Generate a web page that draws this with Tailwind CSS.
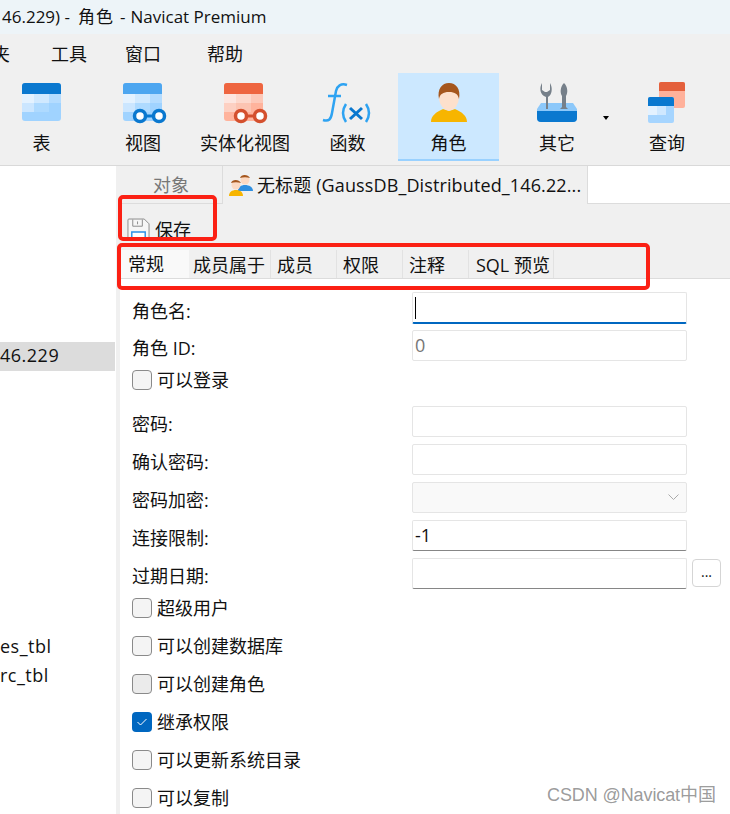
<!DOCTYPE html>
<html lang="zh-CN">
<head>
    <meta charset="UTF-8">
    <title>角色 - Navicat Premium</title>
    <script src="https://cdn.jsdelivr.net/npm/@tailwindcss/browser@4"></script>
</head>
<body class="bg-white">
<div class="relative w-[730px] h-[814px] overflow-hidden text-[18px] leading-[24px] text-[#111] font-['Open_Sans','Noto_Sans_CJK_SC',sans-serif]">

    <!-- Title bar -->
    <div class="h-[34px] bg-[#edf4f8] flex items-center text-[17px] whitespace-pre pl-[2px] pb-[1px]"><span>46.229) -</span><span class="ml-[8px] tracking-[1px]">角色</span><span class="ml-[6px]">-</span><span class="ml-[5px]">Navicat Premium</span></div>

    <!-- Menu -->
    <div class="h-[39px] bg-[#f0f0f0] flex items-center overflow-hidden">
        <span class="w-[10px] shrink-0 overflow-hidden flex justify-end">夹</span>
        <span class="w-[74px] ml-[41px] shrink-0">工具</span>
        <span class="w-[82px] shrink-0">窗口</span>
        <span class="shrink-0">帮助</span>
    </div>

    <!-- Toolbar -->
    <div class="h-[93px] bg-[#f0f0f0] border-b border-[#d9d9d9] flex">
        <div class="w-[83px] flex flex-col items-center pt-[10px]">
            <svg class="w-[40px] h-[39px]" viewBox="0 0 40 39"><rect width="39" height="38" rx="3" fill="#a0d3ff"/><rect y="11" width="12" height="9" fill="#e4f2ff"/><rect x="12" y="11" width="15" height="9" fill="#d0e9ff"/><rect x="27" y="11" width="12" height="9" fill="#b4dcff"/><rect y="20" width="12" height="9" fill="#cbe6ff"/><rect x="12" y="20" width="15" height="9" fill="#aedaff"/><path d="M0 11V3a3 3 0 0 1 3-3h33a3 3 0 0 1 3 3v8z" fill="#0a78cf"/></svg>
            <span class="mt-[9px]">表</span>
        </div>
        <div class="w-[118px] flex flex-col items-center pt-[10px]">
            <svg class="w-[44px] h-[41px] ml-[6px]" viewBox="0 0 44 41"><rect width="39" height="38" rx="3" fill="#a0d3ff"/><rect y="11" width="12" height="9" fill="#e4f2ff"/><rect x="12" y="11" width="15" height="9" fill="#d0e9ff"/><rect x="27" y="11" width="12" height="9" fill="#b4dcff"/><rect y="20" width="12" height="9" fill="#cbe6ff"/><rect x="12" y="20" width="15" height="9" fill="#aedaff"/><path d="M0 11V3a3 3 0 0 1 3-3h33a3 3 0 0 1 3 3v8z" fill="#4da6f0"/><circle cx="17" cy="33" r="5.500" fill="#fff" stroke="#0a78cf" stroke-width="3.500"/><circle cx="36" cy="33" r="5.500" fill="#fff" stroke="#0a78cf" stroke-width="3.500"/><path d="M22 33h9" stroke="#0a78cf" stroke-width="3"/></svg>
            <span class="mt-[7px] ml-[2px]">视图</span>
        </div>
        <div class="w-[88px] flex flex-col items-center pt-[10px]">
            <svg class="w-[44px] h-[41px] shrink-0 ml-[2px]" viewBox="0 0 44 41"><rect width="39" height="38" rx="3" fill="#ffb39c"/><rect y="11" width="12" height="9" fill="#fde6e0"/><rect x="12" y="11" width="15" height="9" fill="#fdd8cc"/><rect x="27" y="11" width="12" height="9" fill="#fdc8b8"/><rect y="20" width="12" height="9" fill="#fdd0c2"/><rect x="12" y="20" width="15" height="9" fill="#fcc4b2"/><path d="M0 11V3a3 3 0 0 1 3-3h33a3 3 0 0 1 3 3v8z" fill="#ee6540"/><circle cx="17" cy="33" r="5.500" fill="#fff" stroke="#d4502e" stroke-width="3.500"/><circle cx="36" cy="33" r="5.500" fill="#fff" stroke="#d4502e" stroke-width="3.500"/><path d="M22 33h9" stroke="#d4502e" stroke-width="3"/></svg>
            <span class="mt-[7px] whitespace-nowrap">实体化视图</span>
        </div>
        <div class="w-[109px] flex flex-col items-center pt-[10px]">
            <svg class="w-[50px] h-[41px] shrink-0 ml-[6px]" viewBox="0 0 50 41"><path d="M1 37c6 2 8-1 9-7l4-22c1-5 5-8 11-6" fill="none" stroke="#2ea3f2" stroke-width="2.500"/><path d="M6 13h13" stroke="#2ea3f2" stroke-width="2.500"/><path d="M24 21c-4 6-4 12 0 18M44 21c4 6 4 12 0 18" fill="none" stroke="#2ea3f2" stroke-width="2.500"/><path d="M28 25l12 11M40 25L28 36" stroke="#0a78cf" stroke-width="3"/></svg>
            <span class="mt-[7px] ml-[8px]">函数</span>
        </div>
        <div class="w-[101px] h-[88px] bg-[#cce8ff] border-b-2 border-[#99d1ff] flex flex-col items-center pt-[10px]">
            <svg class="w-[36px] h-[39px]" viewBox="0 0 36 39"><path d="M0 39c0-6 5-10 12-13l6 2 6-2c7 3 12 7 12 13z" fill="#f7b500"/><ellipse cx="18" cy="14" rx="10" ry="13.500" fill="#fde0cc"/><path d="M8 16C6 6 11 0 18 0s12 6 10 16c-1-5-4-7-10-7s-9 2-10 7z" fill="#a5561d"/></svg>
            <span class="mt-[9px]">角色</span>
        </div>
        <div class="w-[116px] flex flex-col items-center pt-[9px] relative">
            <svg class="w-[40px] h-[41px]" viewBox="0 0 40 41"><path d="M4 21h32l4 6v9a4 4 0 0 1-4 4H4a4 4 0 0 1-4-4v-9z" fill="#8cc8fa"/><path d="M0 29h40v7a4 4 0 0 1-4 4H4a4 4 0 0 1-4-4z" fill="#0a78cf"/><path d="M9 27V15C3 13 2 6 5 1v7l3 2h2l3-2V1c3 5 2 12-2 14v12h-2z" fill="#76808a"/><path d="M23 27l2-2V14c-2-3-2-9 2-13 4 4 4 10 2 13v11l2 2z" fill="#76808a"/></svg>
            <span class="mt-[8px]">其它</span>
            <span class="absolute left-[104px] top-[43px] w-0 h-0 border-x-[3.500px] border-x-transparent border-t-[4px] border-t-black"></span>
        </div>
        <div class="w-[104px] flex flex-col items-center pt-[9px]">
            <svg class="w-[38px] h-[42px]" viewBox="0 0 38 42"><rect x="11" y="0" width="26" height="26" rx="2" fill="#ffb19b"/><path d="M11 9V2a2 2 0 0 1 2-2h22a2 2 0 0 1 2 2v7z" fill="#e4603c"/><rect y="15" width="26" height="26" rx="2" fill="#a6d5ff"/><rect y="24" width="9" height="9" fill="#e4f2ff"/><rect x="9" y="24" width="9" height="9" fill="#cfe8ff"/><path d="M0 24v-7a2 2 0 0 1 2-2h22a2 2 0 0 1 2 2v7z" fill="#0a78cf"/></svg>
            <span class="mt-[7px]">查询</span>
        </div>
    </div>

    <div class="flex h-[648px]">
        <!-- Left tree -->
        <div class="w-[116px] shrink-0 bg-white pt-[176px] overflow-hidden whitespace-nowrap tracking-[0.5px]">
            <div class="h-[29px] w-[115px] bg-[#dcdcdc] flex items-center pb-[3px]">46.229</div>
            <div class="mt-[261px] h-[29px] flex items-center pb-[2px]">es_tbl</div>
            <div class="h-[29px] flex items-center pb-[2px]">rc_tbl</div>
        </div>
        <div class="w-[4px] shrink-0 bg-[#f0f0f0]"></div>

        <!-- Main pane -->
        <div class="flex-1 min-w-0">
            <!-- Document tabs -->
            <div class="h-[38px] flex bg-[#f0f0f0]">
                <div class="w-[102px] h-[38px] flex items-center justify-center text-[#777] border-b border-[#dcdcdc]">对象</div>
                <div class="w-[366px] h-[38px] border-x border-[#dcdcdc] flex items-center pl-[6px] gap-[4px] whitespace-nowrap overflow-hidden">
                    <svg class="w-[24px] h-[22px] shrink-0" viewBox="0 0 24 22"><circle cx="16" cy="6" r="4.500" fill="#fcd9c2"/><path d="M11 4c1-4 8-4 10 0-3-1-7-1-10 0z" fill="#a5561d"/><path d="M9 17c0-4 3-6 7-6s8 2 8 6z" fill="#2f8fe0"/><circle cx="7" cy="11" r="4.500" fill="#fcd9c2"/><path d="M2 9c1-4 8-4 10 0-3-1-7-1-10 0z" fill="#a5561d"/><path d="M0 22c0-4 3-6 7-6s7 2 7 6z" fill="#f7b500"/></svg>
                    <span class="tracking-[0.12px]">无标题 (GaussDB_Distributed_146.22...</span>
                </div>
                <div class="flex-1 bg-white border-b border-[#dcdcdc]"></div>
            </div>

            <!-- Save bar -->
            <div class="h-[46px] bg-[#f0f0f0] flex items-start pt-[13px] pl-[7px] gap-[5px] overflow-hidden">
                <div class="w-[23px] h-[24px] shrink-0 overflow-hidden">
                    <svg class="w-[23px] h-[28px]" viewBox="0 0 24 28"><path d="M2 1.500h16l5 5v20H2a1 1 0 0 1-1-1v-23a1 1 0 0 1 1-1z" fill="#f6f6f6" stroke="#8a8a8a"/><path d="M6 2v7h10V2M11 4v3" fill="none" stroke="#8a8a8a"/><path d="M5 27V15h14v12" fill="#fff" stroke="#2a8fe6" stroke-width="1.500"/><path d="M9 21h6" stroke="#8a8a8a"/></svg>
                </div>
                <span class="mt-[1px]">保存</span>
            </div>

            <!-- Sub tabs -->
            <div class="h-[29px] bg-[#f0f0f0] border-b border-[#dcdcdc] flex whitespace-nowrap">
                <div class="w-[69px] h-[28px] bg-[#f9f9f9] pl-[8px] flex items-center">常规</div>
                <div class="w-[82px] h-[28px] border-r border-[#e2e2e2] pl-[4px] flex items-center pt-[2px]">成员属于</div>
                <div class="w-[66px] h-[28px] border-r border-[#e2e2e2] pl-[6px] flex items-center pt-[2px]">成员</div>
                <div class="w-[66px] h-[28px] border-r border-[#e2e2e2] pl-[6px] flex items-center pt-[2px]">权限</div>
                <div class="w-[66px] h-[28px] border-r border-[#e2e2e2] pl-[6px] flex items-center pt-[2px]">注释</div>
                <div class="w-[85px] h-[28px] border-r border-[#e2e2e2] pl-[7px] flex items-center pt-[2px]">SQL 预览</div>
            </div>

            <!-- Form -->
            <div class="pl-[12px] pt-[13px]">
                <div class="flex h-[32px] items-center">
                    <span class="w-[280px] pt-[6px]">角色名:</span>
                    <div class="w-[275px] h-[32px] border border-[#e5e5e5] border-b-2 border-b-[#0067c0] rounded-[2px] flex items-center pl-[2px]"><span class="w-px h-[22px] bg-black"></span></div>
                </div>
                <div class="flex h-[32px] items-center mt-[5px]">
                    <span class="w-[280px] pt-[6px]">角色 ID:</span>
                    <div class="w-[275px] h-[31px] border border-[#e5e5e5] rounded-[2px] flex items-center pl-[2px] text-[#767676]">0</div>
                </div>
                <div class="flex items-center h-[24px] mt-[7px] gap-[5px]">
                    <span class="w-[20px] h-[20px] border border-[#8a8a8a] rounded-[4px] bg-[#f4f4f4]"></span>可以登录
                </div>
                <div class="flex h-[32px] items-center mt-[13px]">
                    <span class="w-[280px] pt-[6px]">密码:</span>
                    <div class="w-[275px] h-[31px] border border-[#e5e5e5] rounded-[2px]"></div>
                </div>
                <div class="flex h-[32px] items-center mt-[6px]">
                    <span class="w-[280px] pt-[6px]">确认密码:</span>
                    <div class="w-[275px] h-[31px] border border-[#e5e5e5] rounded-[2px]"></div>
                </div>
                <div class="flex h-[32px] items-center mt-[6px]">
                    <span class="w-[280px] pt-[6px]">密码加密:</span>
                    <div class="w-[275px] h-[31px] border border-[#e5e5e5] bg-[#f9f9f9] rounded-[2px] flex items-center justify-end pr-[7px]">
                        <svg class="w-[11px] h-[6px]" viewBox="0 0 11 6"><path d="M.5.500l5 5 5-5" fill="none" stroke="#aaa"/></svg>
                    </div>
                </div>
                <div class="flex h-[32px] items-center mt-[6px]">
                    <span class="w-[280px] pt-[6px]">连接限制:</span>
                    <div class="w-[275px] h-[31px] border border-[#e5e5e5] border-b-[#868686] rounded-[2px] flex items-center pl-[2px]">-1</div>
                </div>
                <div class="flex h-[32px] items-center mt-[6px]">
                    <span class="w-[280px] pt-[6px]">过期日期:</span>
                    <div class="w-[275px] h-[31px] border border-[#e5e5e5] border-b-[#868686] rounded-[2px]"></div>
                    <div class="w-[29px] h-[28px] ml-[5px] border border-[#d5d5d5] rounded-[4px] flex items-center justify-center text-[14px] pb-[2px]">...</div>
                </div>
                <div class="flex flex-col gap-[14px] mt-[7px]">
                    <div class="flex items-center h-[24px] gap-[5px]"><span class="w-[20px] h-[20px] border border-[#8a8a8a] rounded-[4px] bg-[#f4f4f4]"></span>超级用户</div>
                    <div class="flex items-center h-[24px] gap-[5px]"><span class="w-[20px] h-[20px] border border-[#8a8a8a] rounded-[4px] bg-[#f4f4f4]"></span>可以创建数据库</div>
                    <div class="flex items-center h-[24px] gap-[5px]"><span class="w-[20px] h-[20px] border border-[#8a8a8a] rounded-[4px] bg-[#ebebeb]"></span>可以创建角色</div>
                    <div class="flex items-center h-[24px] gap-[5px]"><span class="w-[20px] h-[20px] rounded-[4px] bg-[#0067c0] flex items-center justify-center"><svg class="w-[10px] h-[8px]" viewBox="0 0 10 8"><path d="M.5 4l3 3 6-6" fill="none" stroke="#fff"/></svg></span>继承权限</div>
                    <div class="flex items-center h-[24px] gap-[5px]"><span class="w-[20px] h-[20px] border border-[#8a8a8a] rounded-[4px] bg-[#f4f4f4]"></span>可以更新系统目录</div>
                    <div class="flex items-center h-[24px] gap-[5px]"><span class="w-[20px] h-[20px] border border-[#8a8a8a] rounded-[4px] bg-[#f4f4f4]"></span>可以复制</div>
                </div>
            </div>
        </div>
    </div>

    <!-- Annotations -->
    <div class="absolute left-[118px] top-[195px] w-[99px] h-[46px] border-[4px] border-[#fb2014] rounded-[5px]"></div>
    <div class="absolute left-[117px] top-[243px] w-[533px] h-[47px] border-[4px] border-[#fb2014] rounded-[5px]"></div>

    <!-- Watermark -->
    <div class="absolute left-[547px] top-[783px] text-[18px] tracking-[-0.1px] text-[#8f8f8f]/90 whitespace-nowrap font-['Liberation_Sans','Noto_Sans_CJK_SC',sans-serif]">CSDN @Navicat中国</div>
</div>
</body>
</html>
